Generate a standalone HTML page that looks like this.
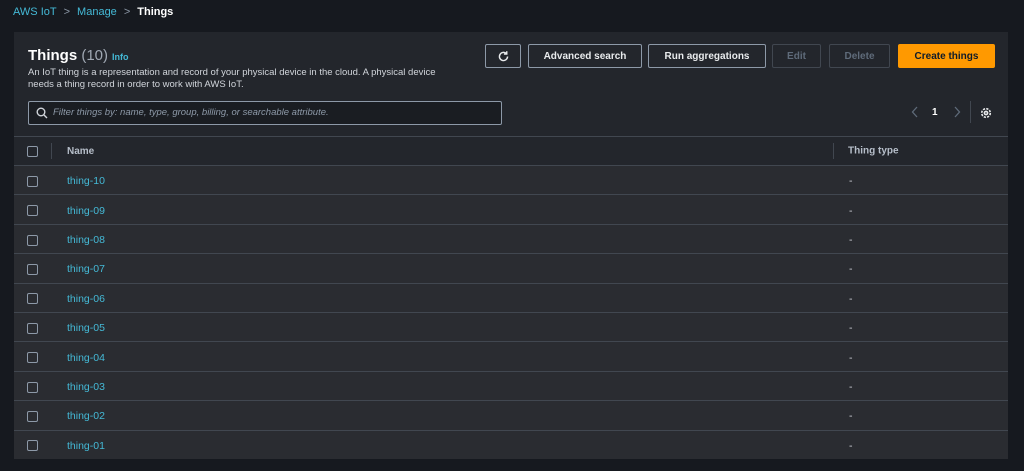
<!DOCTYPE html>
<html><head><style>
*{box-sizing:border-box;margin:0;padding:0}
body{width:1024px;height:471px;background:#16191f;font-family:"Liberation Sans",sans-serif;color:#d1d5db;position:relative;overflow:hidden}
.bc{position:absolute;left:13px;top:6px;font-size:11px;font-weight:bold;color:#fff}
.bc a{color:#44b9d6;font-weight:normal}
.bc .s{color:#8d99a8;margin:0 7px;font-weight:normal}
.panel{position:absolute;left:14px;top:32px;width:994px;height:427px;background:#23262c;overflow:hidden}
h1{position:absolute;left:14px;top:15px;font-size:15px;color:#fff;font-weight:bold}
h1 span{color:#a0a8b3;font-weight:normal}
h1 i{font-style:normal;color:#44b9d6;font-size:9px;margin-left:4px}
.desc{position:absolute;left:14px;top:35px;font-size:9.5px;line-height:12px;color:#d1d5db;width:460px;white-space:nowrap}
.btn{position:absolute;top:12px;height:24px;border:1px solid #8d99a8;border-radius:2px;font-size:10px;font-weight:bold;color:#e9ebed;display:flex;align-items:center;justify-content:center}
.dis{border-color:#414750;color:#5f6b7a}
.pri{background:#ff9900;border-color:#ff9900;color:#0f1b2a}
.search{position:absolute;left:14px;top:69px;width:474px;height:24px;border:1px solid #8d99a8;border-radius:2px;background:#1a1d22;font-size:9.5px;font-style:italic;color:#8d99a8;padding-left:24px;line-height:22px}
.pg{position:absolute;top:73px}
table{position:absolute;left:0;top:104px;width:994px;border-collapse:collapse}
th{height:29px;text-align:left;font-size:10px;color:#b6bec9;border-top:1px solid #414750;border-bottom:1px solid #414750;background:#23262c}
td{height:29.4px;border-bottom:1px solid #414750;background:#2a2c31;font-size:10.5px;padding-top:2px}
td a{color:#44b9d6}
.cb{display:inline-block;width:11px;height:11px;border:1px solid #8d99a8;border-radius:2px;margin-left:13px;vertical-align:middle}
</style></head><body>
<div class="bc"><a>AWS IoT</a><span class="s">&gt;</span><a>Manage</a><span class="s">&gt;</span>Things</div>
<div class="panel">
<h1>Things <span>(10)</span><i>Info</i></h1>
<div class="desc">An IoT thing is a representation and record of your physical device in the cloud. A physical device<br>needs a thing record in order to work with AWS IoT.</div>
<div class="btn" style="left:471px;width:36px"><svg width="13" height="13" viewBox="0 0 16 16" fill="none" stroke="#e9ebed" stroke-width="1.8"><path d="M13 8a5 5 0 1 1-1.5-3.6"/><path d="M12 1.5v3.5H8.5"/></svg></div>
<div class="btn" style="left:514px;width:114px">Advanced search</div>
<div class="btn" style="left:634px;width:118px">Run aggregations</div>
<div class="btn dis" style="left:758px;width:49px">Edit</div>
<div class="btn dis" style="left:815px;width:61px">Delete</div>
<div class="btn pri" style="left:884px;width:97px">Create things</div>
<div class="search"><svg style="position:absolute;left:7px;top:5px" width="12" height="12" viewBox="0 0 12 12" fill="none" stroke="#d1d5db" stroke-width="1.4"><circle cx="5" cy="5" r="3.8"/><path d="M8 8l3 3"/></svg>Filter things by: name, type, group, billing, or searchable attribute.</div>
<svg class="pg" style="left:897px" width="8" height="14" viewBox="0 0 8 14" fill="none" stroke="#5f6b7a" stroke-width="1.3"><path d="M6 2L1.5 7 6 12"/></svg>
<div class="pg" style="left:918px;color:#fff;font-weight:bold;font-size:10px;top:75px">1</div>
<svg class="pg" style="left:939px" width="8" height="14" viewBox="0 0 8 14" fill="none" stroke="#5f6b7a" stroke-width="1.3"><path d="M2 2l4.5 5L2 12"/></svg>
<div style="position:absolute;left:956px;top:69px;width:1px;height:22px;background:#414750"></div>
<svg style="position:absolute;left:966px;top:75px" width="12" height="12" viewBox="0 0 12 12" fill="none" stroke="#e9ebed" stroke-width="1.6"><circle cx="6" cy="6" r="4.3" stroke-dasharray="2.2 1.2"/><circle cx="6" cy="6" r="1.6"/></svg>
<table>
<tr><th style="width:53px"><span class="cb"></span><span style="display:inline-block;width:1px;height:16px;background:#414750;margin-left:13px;vertical-align:middle"></span></th><th style="width:782px">Name</th><th><span style="display:inline-block;width:1px;height:16px;background:#414750;margin-right:14px;vertical-align:middle;margin-left:-16px"></span>Thing type</th></tr>
<tr><td><span class="cb"></span></td><td><a>thing-10</a></td><td>-</td></tr>
<tr><td><span class="cb"></span></td><td><a>thing-09</a></td><td>-</td></tr>
<tr><td><span class="cb"></span></td><td><a>thing-08</a></td><td>-</td></tr>
<tr><td><span class="cb"></span></td><td><a>thing-07</a></td><td>-</td></tr>
<tr><td><span class="cb"></span></td><td><a>thing-06</a></td><td>-</td></tr>
<tr><td><span class="cb"></span></td><td><a>thing-05</a></td><td>-</td></tr>
<tr><td><span class="cb"></span></td><td><a>thing-04</a></td><td>-</td></tr>
<tr><td><span class="cb"></span></td><td><a>thing-03</a></td><td>-</td></tr>
<tr><td><span class="cb"></span></td><td><a>thing-02</a></td><td>-</td></tr>
<tr><td><span class="cb"></span></td><td><a>thing-01</a></td><td>-</td></tr>
</table>
</div>
</body></html>
